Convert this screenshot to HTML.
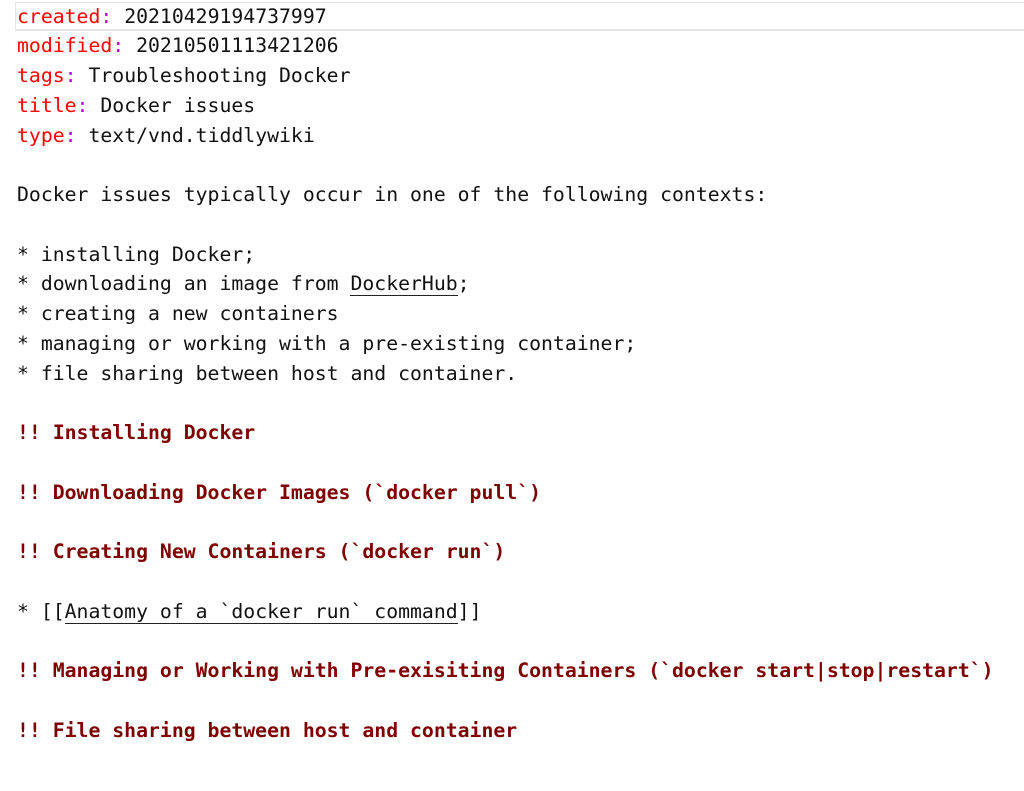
<!DOCTYPE html>
<html><head><style>
html,body{margin:0;padding:0;background:#fff;width:1024px;height:791px;overflow:hidden}
.ed{position:absolute;left:17px;top:1.5px;font-family:"DejaVu Sans Mono","Liberation Mono",monospace;font-size:19.8px;line-height:29.75px;color:#111;white-space:pre}
.cur{position:absolute;left:15px;top:2px;width:1020px;height:29px;border:1px solid #e4e4e4;border-bottom:2px solid #e4e4e4;box-sizing:border-box}
.k{color:#f00}.c{color:#b100d4}
.h{color:#7f0000;font-weight:bold}
.u{border-bottom:1.5px solid #222}
</style></head><body>
<div class="cur"></div>
<div class="ed"><span class="k">created</span><span class="c">:</span> 20210429194737997
<span class="k">modified</span><span class="c">:</span> 20210501113421206
<span class="k">tags</span><span class="c">:</span> Troubleshooting Docker
<span class="k">title</span><span class="c">:</span> Docker issues
<span class="k">type</span><span class="c">:</span> text/vnd.tiddlywiki

Docker issues typically occur in one of the following contexts:

* installing Docker;
* downloading an image from <span class="u">DockerHub</span>;
* creating a new containers
* managing or working with a pre-existing container;
* file sharing between host and container.

<span class="h">!! Installing Docker</span>

<span class="h">!! Downloading Docker Images (`docker pull`)</span>

<span class="h">!! Creating New Containers (`docker run`)</span>

* [[<span class="u">Anatomy of a `docker run` command</span>]]

<span class="h">!! Managing or Working with Pre-exisiting Containers (`docker start|stop|restart`)</span>

<span class="h">!! File sharing between host and container</span>
</div>
</body></html>
